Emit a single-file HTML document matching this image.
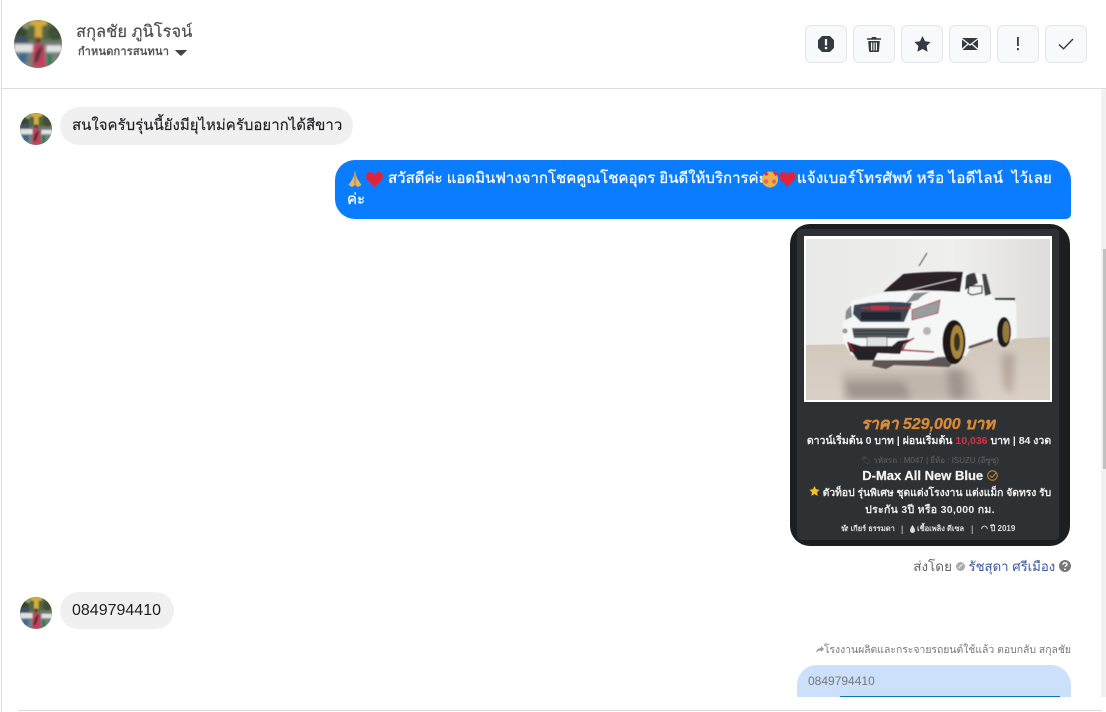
<!DOCTYPE html>
<html lang="th"><head><meta charset="utf-8"><title>Chat</title>
<style>
html,body{margin:0;padding:0;background:#fff;overflow:hidden}
body{width:1106px;height:712px;position:relative;overflow:hidden;font-family:"Liberation Sans","Noto Sans CJK JP",sans-serif;color:#1c1e21}
.a{position:absolute;white-space:nowrap}
.btn{position:absolute;top:25px;width:40px;height:36px;background:#f8f9fa;border:1px solid #e3e5e8;border-radius:6px;display:flex;align-items:center;justify-content:center}
.bub{position:absolute;background:#f0f0f0;border-radius:19px;font-size:16px;color:#1c1e21;white-space:nowrap}
.c{position:absolute;left:0;width:280px;text-align:center;white-space:nowrap}
.w{color:#fff;-webkit-text-stroke:.25px #fff}
</style></head><body>
<svg width="0" height="0" style="position:absolute"><defs>
<filter id="bl"><feGaussianBlur stdDeviation="1.300"/></filter>
<filter id="b2"><feGaussianBlur stdDeviation="0.6"/></filter>
<filter id="b3"><feGaussianBlur stdDeviation="4"/></filter>
<symbol id="av" viewBox="0 0 48 48">
<clipPath id="cc"><circle cx="24" cy="24" r="24"/></clipPath>
<g clip-path="url(#cc)"><rect width="48" height="48" fill="#6e7770"/>
<g filter="url(#bl)"><rect y="0" width="48" height="20" fill="#55663f"/><circle cx="7" cy="12" r="6" fill="#38462f"/><circle cx="41" cy="13" r="7" fill="#3f5034"/><circle cx="12" cy="5" r="4" fill="#8a9a70"/><rect x="0" y="16" width="14" height="7" fill="#3f5166"/><path d="M0 24h19v8H0zM32 25h16v7H32z" fill="#dfe2e2"/><rect y="32" width="48" height="16" fill="#7a807c"/><rect x="5" y="33" width="8" height="9" fill="#3a6a96"/><rect x="33" y="34" width="5" height="11" fill="#2f8058"/><path d="M16 0h17v5l-5 1v12h-7V6l-5-1z" fill="#d4ac3c"/><circle cx="24" cy="20" r="3" fill="#6d3d30"/><path d="M19 25q5-2 11 0l2 22H18z" fill="#c23f5a"/><path d="M22 33l5-7 1 2-4 13-4 2z" fill="#3a2d3c"/></g></g>
</symbol></defs></svg>

<div class="a" style="left:1px;top:0;width:1px;height:712px;background:#ddd"></div>
<div class="a" style="left:2px;top:88px;width:1104px;height:1px;background:#ddd"></div>

<svg class="a" style="left:14px;top:20px" width="48" height="48"><use href="#av"/></svg>
<div class="a" style="left:76px;top:22px;font-size:16.500px;line-height:20px;color:#4a4a4a;-webkit-text-stroke:.15px #4a4a4a">สกุลชัย ภูนิโรจน์</div>
<div class="a" style="left:78px;top:45px;font-size:11px;line-height:15px;color:#555;font-weight:bold;letter-spacing:.2px">กำหนดการสนทนา</div>
<svg class="a" style="left:175px;top:50px" width="12" height="6"><path d="M0.500 0h11q.6 0 .2.6L6.500 5.600q-.5.4-1 0L.3.6Q0 0 .5 0z" fill="#444"/></svg>

<div class="btn" style="left:805px"><svg width="16" height="16" viewBox="0 0 16 16"><path d="M4.800 0h6.400L16 4.800v6.400L11.200 16H4.800L0 11.200V4.800z" fill="#343a40" stroke="#343a40" stroke-linejoin="round"/><rect x="6.900" y="3" width="2.200" height="6.500" rx=".6" fill="#f8f9fa"/><circle cx="8" cy="12" r="1.300" fill="#f8f9fa"/></svg></div>
<div class="btn" style="left:853px"><svg width="14" height="16" viewBox="0 0 14 16"><path d="M0 2.200h4.400L5 1h4l.6 1.200H14v1.600H0z" fill="#343a40"/><path d="M1.200 5h11.600l-.8 10q0 1-1 1H3q-1 0-1-1zM4 6.500v8h1.200v-8zM6.400 6.500v8h1.200v-8zM8.800 6.500v8H10v-8z" fill="#343a40" fill-rule="evenodd"/></svg></div>
<div class="btn" style="left:901px"><svg width="17" height="16" viewBox="0 0 17 16"><path d="M8.500 0l2.500 5.200 5.600.8-4 4 1 5.800-5.100-2.800L3.400 15.800l1-5.800-4-4 5.600-.8z" fill="#343a40"/></svg></div>
<div class="btn" style="left:949px"><svg width="16" height="12" viewBox="0 0 16 12"><path d="M0 0h16L8 6.200zM0 1.600v8.800L5.400 5.800zM16 1.600v8.800l-5.400-4.600zM6.400 6.600L8 7.900l1.600-1.300L15.600 12H.4z" fill="#343a40"/></svg></div>
<div class="btn" style="left:997px"><svg width="4" height="14" viewBox="0 0 4 14"><path d="M1 0h1.800v9H1z" fill="#343a40"/><rect x="1" y="11" width="1.800" height="2.200" fill="#343a40"/></svg></div>
<div class="btn" style="left:1045px"><svg width="16" height="12" viewBox="0 0 16 12"><path d="M1 6.500l4.500 4.300L15 1" fill="none" stroke="#343a40" stroke-width="1.400"/></svg></div>

<!-- scroll region -->
<div class="a" style="left:2px;top:89px;width:1099px;height:608px;overflow:hidden">
  <div style="position:absolute;left:-2px;top:-89px;width:1101px;height:697px;overflow:hidden">
    <svg class="a" style="left:20px;top:113px" width="32" height="32"><use href="#av"/></svg>
    <div class="bub" style="left:60px;top:107px;width:281px;height:38px;line-height:38px;padding-left:12px;font-size:15px;-webkit-text-stroke:.15px #1c1e21">สนใจครับรุ่นนี้ยังมียุไหม่ครับอยากได้สีขาว</div>

    <div class="a" style="left:335px;top:160px;width:736px;height:59px;background:#0a7cff;border-radius:20px 20px 5px 20px"></div>
    <svg class="a" style="left:347px;top:170px" width="38" height="18" viewBox="0 0 38 18"><path d="M8 1q1 1 1 4l1.500 4 4 6-3.500 2-3-2-3 2-3.500-2 4-6L7 5q0-3 1-4z" fill="#e3b566"/><path d="M8 2v13" stroke="#8a6a30" stroke-width=".7"/><path d="M27.500 17l-7.500-7.500q-2.500-4.500 1-7 3.500-1.500 6.500 2 3-3.500 6.500-2 3.500 2.500 1 7z" fill="#e0233d"/></svg>
    <div class="a w" style="left:388px;top:167px;font-size:15px;line-height:23px">สวัสดีค่ะ แอดมินฟางจากโชคคูณโชคอุดร ยินดีให้บริการค่ะ</div>
    <svg class="a" style="left:761px;top:170px" width="36" height="18" viewBox="0 0 36 18"><circle cx="9" cy="9.500" r="8" fill="#eeb04a"/><circle cx="5" cy="11.500" r="2.200" fill="#e06a55"/><circle cx="13" cy="11.500" r="2.200" fill="#e06a55"/><path d="M3 4l2-2.500 2.500 2.500-2.500 2zM12 3l2-2 3 2.500-2.500 2.500z" fill="#dd2e44"/><path d="M26.500 17l-7.500-7.500q-2.500-4.500 1-7 3.500-1.500 6.500 2 3-3.500 6.500-2 3.500 2.500 1 7z" fill="#e0233d"/></svg>
    <div class="a w" style="left:797px;top:167px;font-size:15px;line-height:23px;letter-spacing:.2px">แจ้งเบอร์โทรศัพท์ หรือ ไอดีไลน์&nbsp; ไว้เลย</div>
    <div class="a w" style="left:347px;top:189px;font-size:15px;line-height:22px">ค่ะ</div>

    <!-- card -->
    <div class="a" style="left:790px;top:224px;width:280px;height:322px;background:#1b1f20;border-radius:20px;overflow:hidden">
      <div class="a" style="left:7px;top:5px;width:262px;height:311px;background:#2d3133;border-radius:4px"></div>
      <div class="a" style="left:14px;top:12px;width:248px;height:166px;background:#fff"></div>
      <svg class="a" style="left:16px;top:15px" width="244" height="161" viewBox="0 0 244 161">
        <defs><linearGradient id="wl" x1="0" y1="0" x2="1" y2="0"><stop offset="0" stop-color="#e9e9e7"/><stop offset=".6" stop-color="#efefed"/><stop offset="1" stop-color="#dedddb"/></linearGradient>
        <linearGradient id="fl" x1="0" y1="0" x2="0" y2="1"><stop offset="0" stop-color="#d0c7ba"/><stop offset="1" stop-color="#dbd0c7"/></linearGradient></defs>
        <rect width="244" height="108" fill="url(#wl)"/><path d="M0 106L150 103 244 98V161H0z" fill="url(#fl)"/>
        <g filter="url(#b3)" opacity=".75">
          <path d="M36 132h130l6 29H38z" fill="#b8aea4"/>
          <path d="M38 142h60l8 19H42z" fill="#8d837b"/>
          <path d="M140 130h18l2 31h-16z" fill="#8d837b"/>
          <path d="M195 115h14l-3 40-8-6z" fill="#a89a8e"/>
        </g>
        <g filter="url(#b2)">
          <path d="M70 115h85l-12 13-55-2-8 4-14-3z" fill="#2c2526" opacity=".7"/>
          <path d="M37 82l3-10 7-11 28-7 3-1 18-18 60-2 3 1h13l8 6 5 15 3 6 20 1 2 3 1 33-12 7-8-4-25 6-6 10-28 1-10 3H70l-25-5-8-14z" fill="#f5f6f6"/>
          <path d="M77 53l20-18q30-3 60-2l-3 20q-38-3-77 0z" fill="#2a2426"/>
          <path d="M100 52l50-12" stroke="#eee" stroke-width=".8"/>
          <path d="M159 51l1-14q3-3 9-3l3 10-6 3z" fill="#3a3a3d"/>
          <path d="M176 35h4l5 20-6 2z" fill="#45444a"/>
          <path d="M163 47h13v7l-10 2-4-2z" fill="#f2f3f3" stroke="#222" stroke-width="1.200"/>
          <path d="M189 59h20v2h-20z" fill="#3d3a3a"/>
          <path d="M124 53q-8 3-12 8l-12 3 8-10z" fill="#8a8d90"/>
          <path d="M48 66q28-5 58-2l-8 19-43 0-8-8z" fill="#3a4452"/>
          <path d="M55 69h50" stroke="#b52a40" stroke-width="1.600"/>
          <rect x="65" y="67" width="18" height="4" fill="#c92a3c"/>
          <rect x="55" y="73" width="40" height="8" fill="#222830"/>
          <path d="M106 71l28-10-2 13-26 7z" fill="#9a9da0" stroke="#b52a40" stroke-width=".8"/>
          <path d="M40 72l5-6 1 12-7 3z" fill="#8a8d90"/>
          <path d="M46 89h58l-3 10H48z" fill="#555a5c"/><path d="M47 92h56M47 95h55" stroke="#2a2a2c" stroke-width="1"/>
          <rect x="61" y="98" width="20" height="10" fill="#dfe1e3" stroke="#333" stroke-width=".5"/>
          <circle cx="39" cy="92" r="2.500" fill="#999"/><circle cx="121" cy="92" r="4" fill="#b5b5b0"/>
          <path d="M41 103l3 10 50 2 4-10 8-5-14 2-6 5H55z" fill="#2b2428"/>
          <path d="M42 103l5 9M96 112l4-8 8-5M96 111l32 2" stroke="#9f2236" stroke-width="1.500" fill="none"/>
          <path d="M46 113h26l-4 8H52z" fill="#232021"/>
          <ellipse cx="148" cy="103" rx="11.500" ry="22" fill="#1b1819"/><ellipse cx="151" cy="103" rx="6.500" ry="17" fill="#a8863a"/><ellipse cx="151" cy="103" rx="3" ry="9" fill="#3a3020"/>
          <ellipse cx="198" cy="93" rx="7" ry="15" fill="#1d1a1b"/><ellipse cx="200" cy="93" rx="3.500" ry="11" fill="#97793a"/>
          <path d="M163 107l24-8v3l-25 8z" fill="#6b5552"/>
          <path d="M113 27l8-13" stroke="#444" stroke-width=".9"/>
        </g>
      </svg>
      <div class="c" style="top:191px;left:-2px;font-size:16px;line-height:20px;font-weight:bold;font-style:italic;color:#d98a35;-webkit-text-stroke:.3px #d98a35">ราคา 529,000 บาท</div>
      <div class="c" style="top:210px;font-size:10.500px;line-height:15px;font-weight:bold;color:#f2f2f2;left:-1px">ดาวน์เริ่มต้น 0 บาท | ผ่อนเริ่มต้น <span style="color:#dd3045">10,036</span> บาท | 84 งวด</div>
      <div class="c" style="top:231px;font-size:8px;line-height:12px;color:#5f6568">🏷 รหัสรถ : M047 | ยี่ห้อ : ISUZU (อีซูซุ)</div>
      <div class="c" style="top:244px;font-size:13px;line-height:16px;font-weight:bold;color:#f4f4f4;-webkit-text-stroke:.2px #f4f4f4">D-Max All New Blue <svg width="11" height="11" viewBox="0 0 11 11" style="vertical-align:-1px"><circle cx="5.500" cy="5.500" r="4.800" fill="none" stroke="#c98a35"/><path d="M3 5.500l2 2 4-4.500" fill="none" stroke="#c98a35"/></svg></div>
      <div class="c" style="top:262px;font-size:10.300px;line-height:16px;font-weight:bold;color:#eee"><svg width="11" height="10" viewBox="0 0 17 16"><path d="M8.500 0l2.500 5.200 5.600.8-4 4 1 5.800-5.100-2.800-5.100 2.800 1-5.800-4-4 5.600-.8z" fill="#f4c020"/></svg> ตัวท็อป รุ่นพิเศษ ชุดแต่งโรงงาน แต่งแม็ก จัดทรง รับ</div>
      <div class="c" style="top:278px;font-size:10.500px;line-height:16px;font-weight:bold;color:#eee;letter-spacing:.3px">ประกัน 3ปี หรือ 30,000 กม.</div>
      <div class="a" style="left:51px;top:299px;font-size:7.500px;line-height:12px;font-weight:bold;color:#ddd">✿ เกียร์ ธรรมดา</div>
      <div class="a" style="left:111px;top:299px;font-size:9px;line-height:12px;color:#ddd">|</div>
      <svg class="a" style="left:120px;top:301px" width="5" height="8" viewBox="0 0 5 8"><path d="M2.500 0Q5 3.500 5 5.500A2.500 2.500 0 0 1 0 5.500Q0 3.500 2.500 0z" fill="#ddd"/></svg>
      <div class="a" style="left:127px;top:299px;font-size:7.500px;line-height:12px;font-weight:bold;color:#ddd">เชื้อเพลิง ดีเซล</div>
      <div class="a" style="left:181px;top:299px;font-size:9px;line-height:12px;color:#ddd">|</div>
      <div class="a" style="left:191px;top:299px;font-size:8px;line-height:12px;font-weight:bold;color:#ddd">◠ ปี 2019</div>
    </div>

    <div class="a" style="right:30px;top:557px;font-size:13.500px;line-height:20px;color:#666">ส่งโดย <svg width="9" height="9" viewBox="0 0 9 9"><circle cx="4.500" cy="4.500" r="4.500" fill="#aaa"/><path d="M2 6.500L6.500 2" stroke="#eee"/></svg> <span style="color:#3b5998;font-size:13.200px">รัชสุดา ศรีเมือง</span> <svg width="12" height="12" viewBox="0 0 12 12" style="vertical-align:-1px"><circle cx="6" cy="6" r="6" fill="#777"/><path d="M4 4.700q0-1.900 2-1.900t2 1.700q0 1-1.200 1.500-.8.300-.8 1" fill="none" stroke="#fff" stroke-width="1.300"/><circle cx="6" cy="9.300" r=".9" fill="#fff"/></svg></div>

    <svg class="a" style="left:20px;top:597px" width="32" height="32"><use href="#av"/></svg>
    <div class="bub" style="left:60px;top:592px;width:102px;height:37px;line-height:37px;padding-left:12px">0849794410</div>

    <div class="a" style="right:30px;top:643px;font-size:10.400px;line-height:15px;color:#777"><svg width="8" height="7" viewBox="0 0 8 7"><path d="M5 0l3 3-3 3V4.500Q2 4.300 0 7q.5-4.500 5-5z" fill="#999"/></svg>โรงงานผลิตและกระจายรถยนต์ใช้แล้ว ตอบกลับ สกุลชัย</div>
    <div class="a" style="left:797px;top:665px;width:274px;height:32px;background:#cce0fb;border-radius:20px 20px 0 0"></div>
    <div class="a" style="left:808px;top:673px;font-size:12px;line-height:16px;color:#777">0849794410</div>
    <div class="a" style="left:840px;top:696px;width:220px;height:1px;background:#0a78b5"></div>
  </div>
</div>

<!-- scrollbar -->
<div class="a" style="left:1101px;top:89px;width:5px;height:608px;background:#f1f1f1"></div>
<div class="a" style="left:1103px;top:249px;width:3px;height:220px;background:#c1c1c1"></div>
<!-- bottom input edge -->
<div class="a" style="left:18px;top:710px;width:1084px;height:1px;background:#ddd"></div>
</body></html>
